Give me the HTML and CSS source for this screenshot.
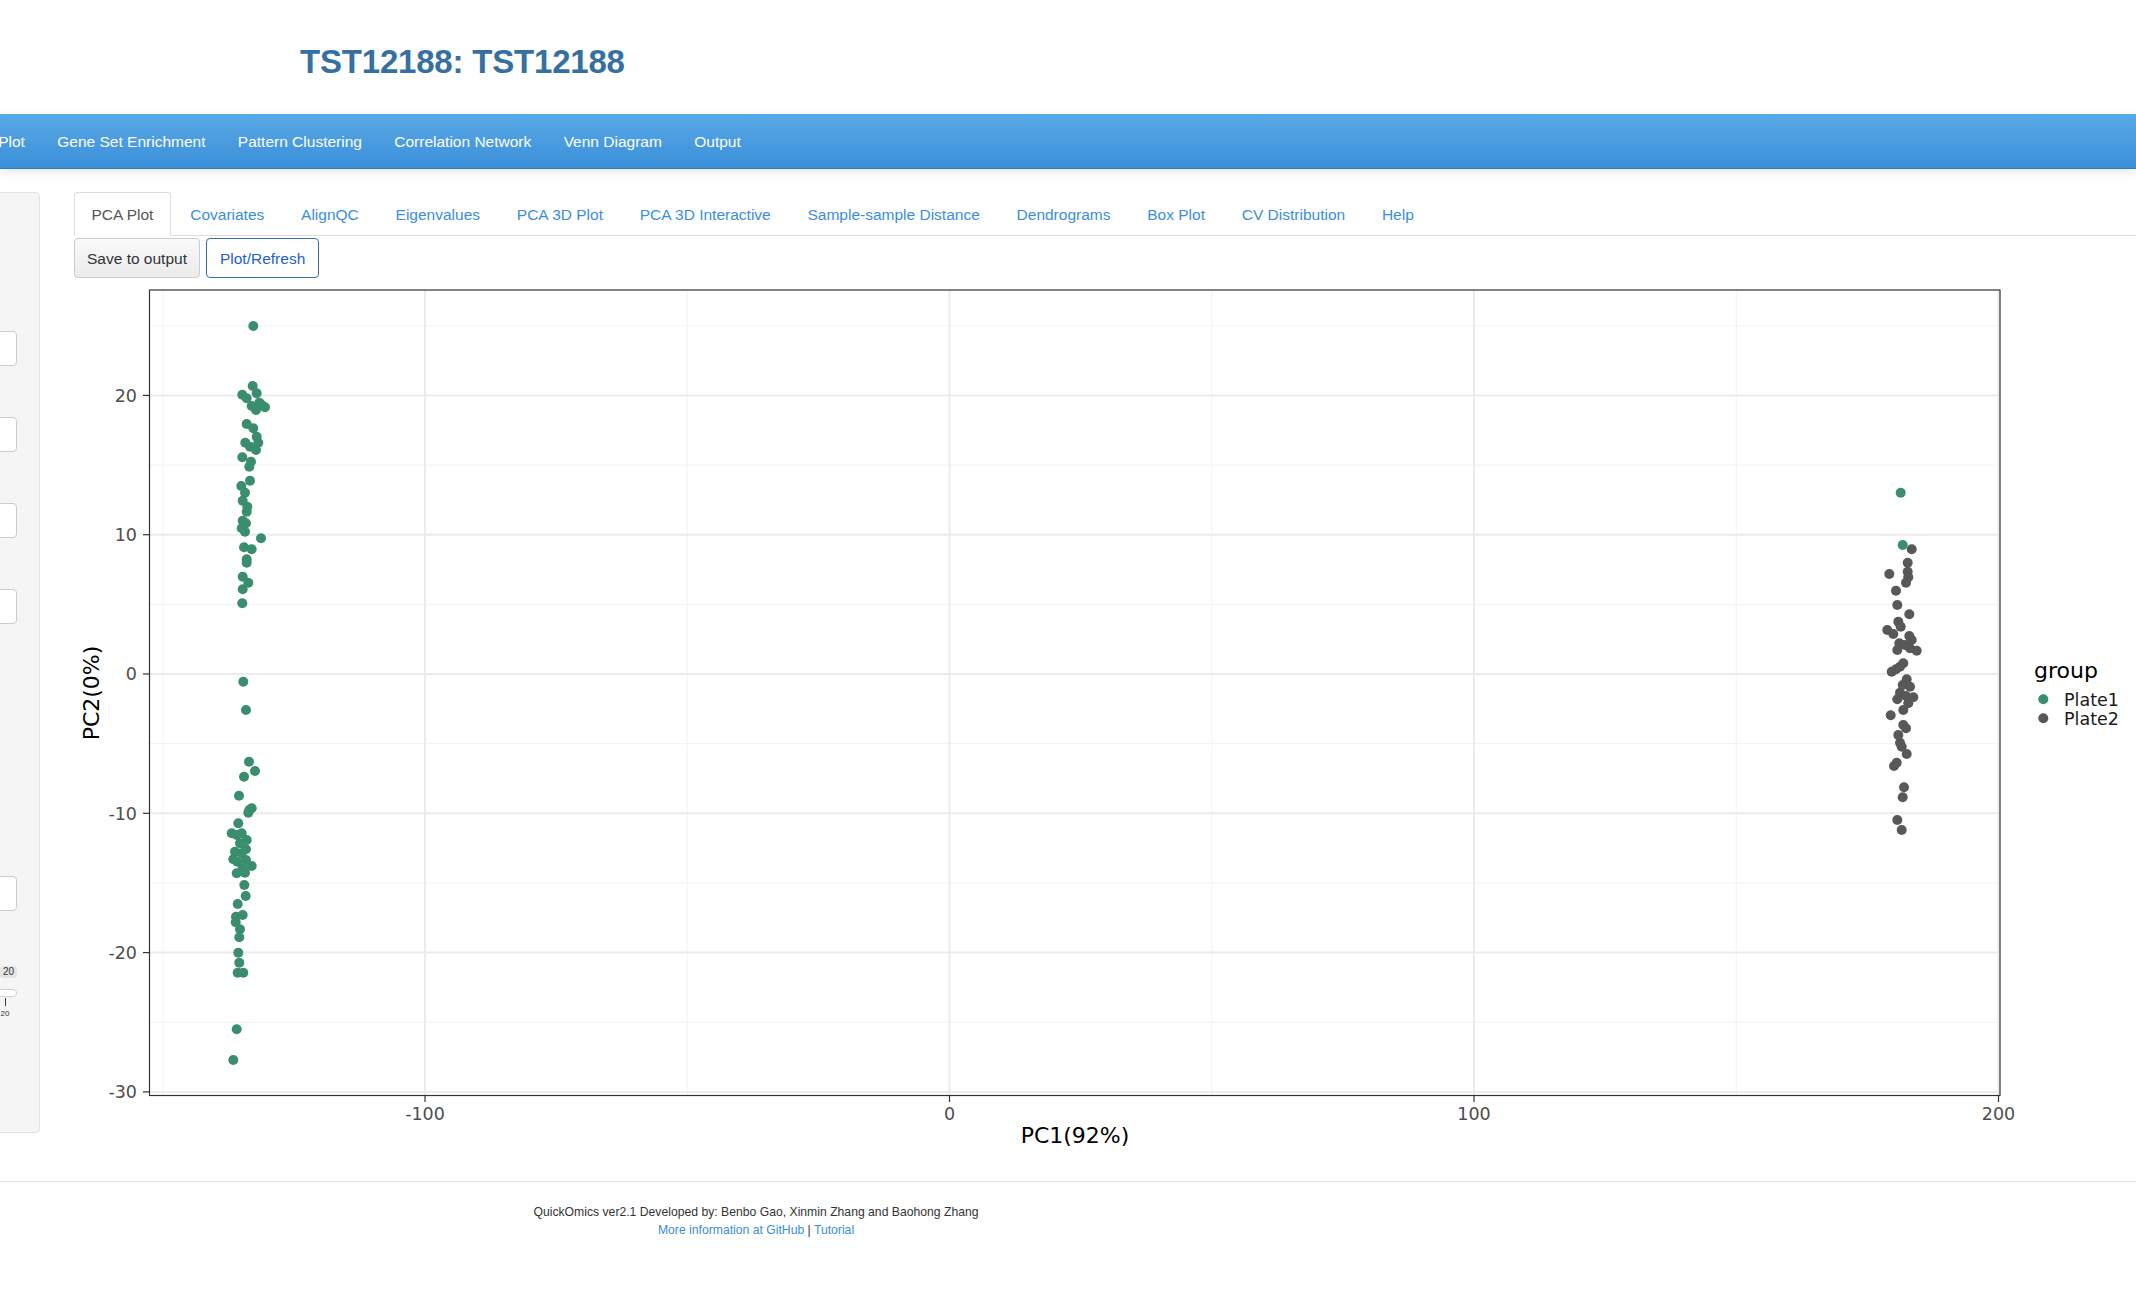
FILE: index.html
```html
<!DOCTYPE html>
<html>
<head>
<meta charset="utf-8">
<title>QuickOmics</title>
<link rel="stylesheet" href="styles.css">
</head>
<body>
<header class="header">
  <h1 class="title">TST12188: TST12188</h1>
</header>
<nav class="navbar">
  <ul class="nav-list">
    <li>Expression Plot</li>
    <li>Gene Set Enrichment</li>
    <li>Pattern Clustering</li>
    <li>Correlation Network</li>
    <li>Venn Diagram</li>
    <li>Output</li>
  </ul>
</nav>
<div class="content-row">
  <aside class="sidebar">
    <div class="input first"></div>
    <div class="input gap1"></div>
    <div class="input gap1"></div>
    <div class="input gap1"></div>
    <div class="input gap2"></div>
    <div class="slider">
      <div class="badge-row"><span class="badge">20</span></div>
      <div class="track"></div>
      <div class="tick-row"><div class="tick-col"><span class="tick"></span><span class="tick-label">20</span></div></div>
    </div>
  </aside>
  <main class="main">
    <ul class="tabs">
      <li class="tab active">PCA Plot</li>
      <li class="tab">Covariates</li>
      <li class="tab">AlignQC</li>
      <li class="tab">Eigenvalues</li>
      <li class="tab">PCA 3D Plot</li>
      <li class="tab">PCA 3D Interactive</li>
      <li class="tab">Sample-sample Distance</li>
      <li class="tab">Dendrograms</li>
      <li class="tab">Box Plot</li>
      <li class="tab">CV Distribution</li>
      <li class="tab">Help</li>
    </ul>
    <div class="buttons">
      <button class="btn btn-default">Save to output</button>
      <button class="btn btn-outline">Plot/Refresh</button>
    </div>
    <svg class="plot" width="2062" height="868" viewBox="0 0 2062 868" xmlns="http://www.w3.org/2000/svg">
      <g transform="translate(-74,-282)">
        <rect x="149.5" y="290" width="1850.5" height="805.5" fill="#ffffff"/>
        <g stroke="#f2f2f2" stroke-width="1">
          <line x1="162.75" y1="290" x2="162.75" y2="1095.5"/>
          <line x1="687.25" y1="290" x2="687.25" y2="1095.5"/>
          <line x1="1211.75" y1="290" x2="1211.75" y2="1095.5"/>
          <line x1="1736.25" y1="290" x2="1736.25" y2="1095.5"/>
          <line x1="149.5" y1="325.75" x2="2000" y2="325.75"/>
          <line x1="149.5" y1="465.05" x2="2000" y2="465.05"/>
          <line x1="149.5" y1="604.35" x2="2000" y2="604.35"/>
          <line x1="149.5" y1="743.65" x2="2000" y2="743.65"/>
          <line x1="149.5" y1="882.95" x2="2000" y2="882.95"/>
          <line x1="149.5" y1="1022.25" x2="2000" y2="1022.25"/>
        </g>
        <g stroke="#ebebeb" stroke-width="2">
          <line x1="425" y1="290" x2="425" y2="1095.5"/>
          <line x1="949.5" y1="290" x2="949.5" y2="1095.5"/>
          <line x1="1474" y1="290" x2="1474" y2="1095.5"/>
          <line x1="1998.5" y1="290" x2="1998.5" y2="1095.5"/>
          <line x1="149.5" y1="395.4" x2="2000" y2="395.4"/>
          <line x1="149.5" y1="534.7" x2="2000" y2="534.7"/>
          <line x1="149.5" y1="674" x2="2000" y2="674"/>
          <line x1="149.5" y1="813.3" x2="2000" y2="813.3"/>
          <line x1="149.5" y1="952.6" x2="2000" y2="952.6"/>
          <line x1="149.5" y1="1091.9" x2="2000" y2="1091.9"/>
        </g>
        <g fill="#3a8e6e">
          <circle cx="253.3" cy="326" r="5"/>
          <circle cx="252.7" cy="386" r="5"/>
          <circle cx="242.3" cy="394.7" r="5"/>
          <circle cx="256.7" cy="393.3" r="5"/>
          <circle cx="246.7" cy="398.3" r="5"/>
          <circle cx="251.7" cy="406" r="5"/>
          <circle cx="256" cy="410" r="5"/>
          <circle cx="261.7" cy="405" r="5"/>
          <circle cx="265" cy="407.3" r="5"/>
          <circle cx="259.3" cy="402.7" r="5"/>
          <circle cx="246.7" cy="424" r="5"/>
          <circle cx="253.3" cy="428.3" r="5"/>
          <circle cx="256.7" cy="436.7" r="5"/>
          <circle cx="245.3" cy="442.7" r="5"/>
          <circle cx="258.3" cy="442.7" r="5"/>
          <circle cx="250" cy="446.7" r="5"/>
          <circle cx="256" cy="450" r="5"/>
          <circle cx="242.3" cy="457.3" r="5"/>
          <circle cx="251" cy="461.7" r="5"/>
          <circle cx="249.3" cy="466.7" r="5"/>
          <circle cx="250" cy="480.7" r="5"/>
          <circle cx="241.3" cy="486" r="5"/>
          <circle cx="245" cy="492.7" r="5"/>
          <circle cx="242.7" cy="500.7" r="5"/>
          <circle cx="247.3" cy="506.7" r="5"/>
          <circle cx="246.7" cy="511.7" r="5"/>
          <circle cx="242.7" cy="520.7" r="5"/>
          <circle cx="246" cy="523.3" r="5"/>
          <circle cx="241.7" cy="528.3" r="5"/>
          <circle cx="245" cy="531.7" r="5"/>
          <circle cx="261" cy="538.3" r="5"/>
          <circle cx="244" cy="547.3" r="5"/>
          <circle cx="251.7" cy="549.3" r="5"/>
          <circle cx="246.7" cy="559.3" r="5"/>
          <circle cx="246.7" cy="562.7" r="5"/>
          <circle cx="242.7" cy="576.7" r="5"/>
          <circle cx="248.3" cy="582.7" r="5"/>
          <circle cx="242.7" cy="589.3" r="5"/>
          <circle cx="242.3" cy="603.3" r="5"/>
          <circle cx="243.3" cy="681.7" r="5"/>
          <circle cx="246" cy="710" r="5"/>
          <circle cx="249" cy="761.7" r="5"/>
          <circle cx="255" cy="771" r="5"/>
          <circle cx="244" cy="776.7" r="5"/>
          <circle cx="239" cy="795.7" r="5"/>
          <circle cx="249.3" cy="810" r="5"/>
          <circle cx="251.7" cy="808.3" r="5"/>
          <circle cx="248.3" cy="812.7" r="5"/>
          <circle cx="238.3" cy="823.3" r="5"/>
          <circle cx="231.7" cy="833.3" r="5"/>
          <circle cx="236.7" cy="835" r="5"/>
          <circle cx="241.7" cy="833.3" r="5"/>
          <circle cx="246.7" cy="840" r="5"/>
          <circle cx="240" cy="843.3" r="5"/>
          <circle cx="246" cy="849.3" r="5"/>
          <circle cx="235" cy="851.7" r="5"/>
          <circle cx="241.7" cy="853.3" r="5"/>
          <circle cx="233.3" cy="859.3" r="5"/>
          <circle cx="237.3" cy="861.7" r="5"/>
          <circle cx="246" cy="860" r="5"/>
          <circle cx="251.7" cy="866" r="5"/>
          <circle cx="242.7" cy="868.3" r="5"/>
          <circle cx="236.7" cy="873.3" r="5"/>
          <circle cx="245" cy="872.7" r="5"/>
          <circle cx="244.3" cy="885" r="5"/>
          <circle cx="245.7" cy="896" r="5"/>
          <circle cx="237.7" cy="904" r="5"/>
          <circle cx="242.7" cy="915" r="5"/>
          <circle cx="236" cy="916.7" r="5"/>
          <circle cx="235.7" cy="922.3" r="5"/>
          <circle cx="240" cy="929.3" r="5"/>
          <circle cx="239.3" cy="937.3" r="5"/>
          <circle cx="238.3" cy="952.7" r="5"/>
          <circle cx="239.3" cy="962.7" r="5"/>
          <circle cx="237.7" cy="972.7" r="5"/>
          <circle cx="243.3" cy="972.7" r="5"/>
          <circle cx="236.7" cy="1029.3" r="5"/>
          <circle cx="233.3" cy="1060" r="5"/>
        </g>
        <g fill="#585858">
          <circle cx="1911.7" cy="549.3" r="5"/>
          <circle cx="1907.7" cy="562.7" r="5"/>
          <circle cx="1889.3" cy="574" r="5"/>
          <circle cx="1907.7" cy="571.7" r="5"/>
          <circle cx="1908.3" cy="577.3" r="5"/>
          <circle cx="1906" cy="582.7" r="5"/>
          <circle cx="1896" cy="590.7" r="5"/>
          <circle cx="1897.3" cy="605" r="5"/>
          <circle cx="1909.3" cy="614.3" r="5"/>
          <circle cx="1898.3" cy="621.7" r="5"/>
          <circle cx="1887.3" cy="630" r="5"/>
          <circle cx="1893.3" cy="634" r="5"/>
          <circle cx="1900.7" cy="626.7" r="5"/>
          <circle cx="1909.3" cy="636" r="5"/>
          <circle cx="1911.7" cy="640" r="5"/>
          <circle cx="1899.3" cy="643.3" r="5"/>
          <circle cx="1905" cy="645" r="5"/>
          <circle cx="1897.3" cy="650" r="5"/>
          <circle cx="1916.7" cy="650.7" r="5"/>
          <circle cx="1910" cy="648.3" r="5"/>
          <circle cx="1903.3" cy="663.3" r="5"/>
          <circle cx="1900" cy="666.7" r="5"/>
          <circle cx="1891.7" cy="671.7" r="5"/>
          <circle cx="1896" cy="669.3" r="5"/>
          <circle cx="1906.7" cy="679.3" r="5"/>
          <circle cx="1902.7" cy="685" r="5"/>
          <circle cx="1910" cy="686.7" r="5"/>
          <circle cx="1900" cy="692.7" r="5"/>
          <circle cx="1913.3" cy="697.3" r="5"/>
          <circle cx="1906" cy="696" r="5"/>
          <circle cx="1897.3" cy="699.3" r="5"/>
          <circle cx="1908.3" cy="703.3" r="5"/>
          <circle cx="1903.3" cy="710" r="5"/>
          <circle cx="1890.7" cy="715.3" r="5"/>
          <circle cx="1903.3" cy="725" r="5"/>
          <circle cx="1906" cy="728.3" r="5"/>
          <circle cx="1898.3" cy="735" r="5"/>
          <circle cx="1900" cy="742.7" r="5"/>
          <circle cx="1901.7" cy="746.7" r="5"/>
          <circle cx="1906.7" cy="754" r="5"/>
          <circle cx="1896.7" cy="762.7" r="5"/>
          <circle cx="1894" cy="766" r="5"/>
          <circle cx="1904" cy="787.3" r="5"/>
          <circle cx="1902.7" cy="797.3" r="5"/>
          <circle cx="1897.3" cy="820" r="5"/>
          <circle cx="1901.7" cy="830" r="5"/>
        </g>
        <g fill="#3a8e6e">
          <circle cx="1900.7" cy="492.7" r="5"/>
          <circle cx="1902.7" cy="545" r="5"/>
        </g>
        <rect x="149.5" y="290" width="1850.5" height="805.5" fill="none" stroke="#333333" stroke-width="1.2"/>
        <g stroke="#333333" stroke-width="1.2">
          <line x1="143" y1="395.4" x2="149.5" y2="395.4"/>
          <line x1="143" y1="534.7" x2="149.5" y2="534.7"/>
          <line x1="143" y1="674" x2="149.5" y2="674"/>
          <line x1="143" y1="813.3" x2="149.5" y2="813.3"/>
          <line x1="143" y1="952.6" x2="149.5" y2="952.6"/>
          <line x1="143" y1="1091.9" x2="149.5" y2="1091.9"/>
          <line x1="425" y1="1095.5" x2="425" y2="1102"/>
          <line x1="949.5" y1="1095.5" x2="949.5" y2="1102"/>
          <line x1="1474" y1="1095.5" x2="1474" y2="1102"/>
          <line x1="1998.5" y1="1095.5" x2="1998.5" y2="1102"/>
        </g>
        <g class="tick-text" text-anchor="end">
          <text x="137" y="401.6">20</text>
          <text x="137" y="540.9">10</text>
          <text x="137" y="680.2">0</text>
          <text x="137" y="819.5">-10</text>
          <text x="137" y="958.8">-20</text>
          <text x="137" y="1098.1">-30</text>
        </g>
        <g class="tick-text" text-anchor="middle">
          <text x="425" y="1119.5">-100</text>
          <text x="949.5" y="1119.5">0</text>
          <text x="1474" y="1119.5">100</text>
          <text x="1998.5" y="1119.5">200</text>
        </g>
        <text class="axis-title" x="1075" y="1143" text-anchor="middle">PC1(92%)</text>
        <text class="axis-title" x="0" y="0" text-anchor="middle" transform="translate(99,693) rotate(-90)">PC2(0%)</text>
        <text class="legend-title" x="2034" y="678">group</text>
        <circle cx="2043.3" cy="699.3" r="5" fill="#3a8e6e"/>
        <circle cx="2043.3" cy="718.3" r="5" fill="#585858"/>
        <text class="legend-text" x="2064" y="705.5">Plate1</text>
        <text class="legend-text" x="2064" y="724.5">Plate2</text>
      </g>
    </svg>
  </main>
</div>
<footer class="footer">
  <div class="footer-inner">
    <div class="credit">QuickOmics ver2.1 Developed by: Benbo Gao, Xinmin Zhang and Baohong Zhang</div>
    <div class="links"><a class="link">More information at GitHub</a> | <a class="link">Tutorial</a></div>
  </div>
</footer>
</body>
</html>
```

FILE: styles.css
```css
html, body {
  margin: 0;
  padding: 0;
  background: #ffffff;
}
body {
  width: 2136px;
  height: 1290px;
  overflow: hidden;
  font-family: "Liberation Sans", Arial, Helvetica, sans-serif;
  color: #333333;
}
.header {
  padding: 44px 0 0 300px;
  height: 36px;
}
.title {
  margin: 0;
  font-size: 33px;
  line-height: 36px;
  font-weight: bold;
  color: #3670a3;
  letter-spacing: -0.2px;
}
.navbar {
  margin-top: 34px;
  height: 54px;
  background: linear-gradient(#5aaae6, #3a8fd8);
  border-bottom: 1px solid #2f7ec4;
  box-shadow: 0 3px 9px rgba(0, 0, 0, 0.10);
  position: relative;
  z-index: 1;
}
.nav-list {
  list-style: none;
  margin: 0 0 0 -99px;
  padding: 2px 0 0 0;
  box-sizing: border-box;
  display: flex;
  height: 54px;
  align-items: center;
}
.nav-list li {
  padding: 0 16.2px;
  font-size: 15.5px;
  color: #ffffff;
  white-space: nowrap;
}
.content-row {
  display: flex;
  margin-top: 23px;
  align-items: flex-start;
}
.sidebar {
  flex: none;
  width: 440px;
  margin-left: -400px;
  height: 941px;
  box-sizing: border-box;
  background: #f5f5f5;
  border: 1px solid #e3e3e3;
  border-radius: 4px;
  padding: 0 22px 0 19px;
}
.input {
  height: 35px;
  box-sizing: border-box;
  background: #ffffff;
  border: 1px solid #cccccc;
  border-radius: 4px;
}
.input.first { margin-top: 138px; }
.input.gap1 { margin-top: 51px; }
.input.gap2 { margin-top: 252px; }
.slider {
  margin-top: 55px;
}
.badge-row {
  display: flex;
  justify-content: flex-end;
}
.badge {
  display: inline-block;
  background: #e4e4e4;
  color: #333333;
  font-size: 10px;
  line-height: 12px;
  padding: 0 3px;
  border-radius: 3px;
}
.track {
  margin-top: 11px;
  height: 8px;
  box-sizing: border-box;
  background: #ffffff;
  border: 1px solid #cfcfcf;
  border-radius: 5px;
}
.tick-row {
  display: flex;
  justify-content: flex-end;
}
.tick-col {
  width: 10px;
  margin-right: 7px;
  display: flex;
  flex-direction: column;
  align-items: center;
}
.tick {
  width: 1px;
  height: 8px;
  background: #333333;
  margin-top: 1px;
}
.tick-label {
  font-size: 8px;
  line-height: 10px;
  margin-top: 3px;
  color: #333333;
}
.main {
  flex: 1;
  margin-left: 34px;
  min-width: 0;
}
.tabs {
  list-style: none;
  margin: 0;
  padding: 0;
  display: flex;
  border-bottom: 1px solid #dddddd;
}
.tab {
  margin: 0 2px -1px 0;
  padding: 12px 16.4px 10px;
  line-height: 20px;
  font-size: 15.5px;
  color: #3a8edb;
  border: 1px solid transparent;
  border-radius: 4px 4px 0 0;
  white-space: nowrap;
}
.tab.active {
  color: #555555;
  background: #ffffff;
  border-color: #dddddd #dddddd transparent;
}
.buttons {
  display: flex;
  gap: 6px;
  margin-top: 2px;
}
.btn {
  height: 40px;
  padding: 2px 12px 0;
  font-family: "Liberation Sans", Arial, Helvetica, sans-serif;
  font-size: 15.5px;
  border-radius: 4px;
  cursor: pointer;
}
.btn-default {
  background: linear-gradient(#fafafa, #ebebeb);
  border: 1px solid #cccccc;
  color: #333333;
}
.btn-outline {
  padding: 2px 13px 0;
  background: #ffffff;
  border: 1px solid #3b6fa6;
  color: #1f5fc6;
}
.plot {
  display: block;
  margin-top: 4px;
}
.tick-text {
  font-family: "DejaVu Sans", sans-serif;
  font-size: 17.5px;
  fill: #4d4d4d;
}
.axis-title {
  font-family: "DejaVu Sans", sans-serif;
  font-size: 22px;
  fill: #000000;
}
.legend-title {
  font-family: "DejaVu Sans", sans-serif;
  font-size: 22px;
  fill: #000000;
}
.legend-text {
  font-family: "DejaVu Sans", sans-serif;
  font-size: 17.5px;
  fill: #1a1a1a;
}
.footer {
  margin-top: 31px;
  border-top: 1px solid #e5e5e5;
}
.footer-inner {
  width: 1512px;
  text-align: center;
  padding-top: 22px;
  font-size: 12.2px;
  line-height: 17.5px;
  color: #333333;
}
.link {
  color: #3a8edb;
}
```
